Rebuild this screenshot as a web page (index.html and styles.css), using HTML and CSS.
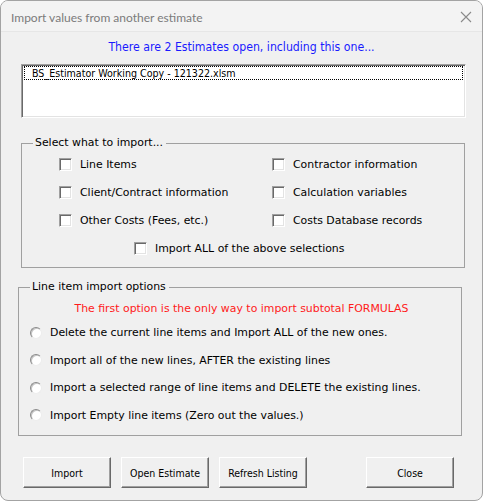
FILE: index.html
```html
<!DOCTYPE html>
<html lang="en">
<head>
    <meta charset="UTF-8">
    <title>Import values from another estimate</title>
    <link rel="stylesheet" href="styles.css">
</head>
<body>
<div class="window">
    <div class="titlebar">
        <span class="title">Import values from another estimate</span>
        <svg class="close-x" width="12" height="12" viewBox="0 0 12 12">
            <path d="M1 1 L11 11 M11 1 L1 11" stroke="#8a8a8a" stroke-width="1.1" fill="none"/>
        </svg>
    </div>
    <div class="form">
        <div class="caption">There are 2 Estimates open, including this one...</div>
        <div class="listbox">
            <div class="list-item selected">BS_Estimator Working Copy - 121322.xlsm</div>
        </div>

        <fieldset class="frame frame-select">
            <legend>Select what to import...</legend>
            <div class="check-grid">
                <label class="check"><span class="box"></span>Line Items</label>
                <label class="check"><span class="box"></span>Contractor information</label>
                <label class="check"><span class="box"></span>Client/Contract information</label>
                <label class="check"><span class="box"></span>Calculation variables</label>
                <label class="check"><span class="box"></span>Other Costs (Fees, etc.)</label>
                <label class="check"><span class="box"></span>Costs Database records</label>
                <label class="check check-all"><span class="box"></span>Import ALL of the above selections</label>
            </div>
        </fieldset>

        <fieldset class="frame frame-options">
            <legend>Line item import options</legend>
            <div class="warning">The first option is the only way to import subtotal FORMULAS</div>
            <div class="radio-list">
                <label class="radio"><span class="dot"></span>Delete the current line items and Import ALL of the new ones.</label>
                <label class="radio"><span class="dot"></span>Import all of the new lines, AFTER the existing lines</label>
                <label class="radio"><span class="dot"></span>Import a selected range of line items and DELETE the existing lines.</label>
                <label class="radio"><span class="dot"></span>Import Empty line items (Zero out the values.)</label>
            </div>
        </fieldset>

        <div class="buttons">
            <button>Import</button>
            <button>Open Estimate</button>
            <button>Refresh Listing</button>
            <button class="btn-close">Close</button>
        </div>
    </div>
</div>
</body>
</html>
```
FILE: styles.css
```css
* {
    box-sizing: border-box;
    margin: 0;
    padding: 0;
}

body {
    font-family: "DejaVu Sans", sans-serif;
    font-size: 10.9px;
    color: #000;
    background: #fff;
}

.window {
    width: 483px;
    height: 501px;
    border: 1px solid #a3a3a3;
    border-radius: 8px;
    background: #f0f0f0;
    overflow: hidden;
}

.titlebar {
    height: 31px;
    background: #f3f3f3;
    border-bottom: 1px solid #e6e6e6;
    display: flex;
    align-items: center;
    justify-content: space-between;
    padding: 0 10px 0 10px;
}

.title {
    font-family: Lato, sans-serif;
    font-size: 12px;
    color: #7b7b7b;
    margin-top: 2px;
}

.close-x {
    margin-top: 1px;
}

.caption {
    margin-top: 7px;
    height: 16px;
    line-height: 16px;
    text-align: center;
    color: #1a1aff;
    font-size: 12.2px;
    font-stretch: condensed;
}

.listbox {
    margin: 9px 0 0 20px;
    width: 445px;
    height: 54px;
    background: #fff;
    border: 1px solid;
    border-color: #a0a0a0 #fff #fff #a0a0a0;
    box-shadow: inset 1px 1px 0 #696969, inset -1px -1px 0 #e3e3e3;
    padding: 1px 2px 0 2px;
}

.list-item {
    height: 14px;
    line-height: 12px;
    padding-left: 7px;
    white-space: nowrap;
    font-size: 10.6px;
    font-stretch: condensed;
}

.list-item.selected {
    border: 1px dotted #000;
}

.frame {
    border: 1px solid #a0a0a0;
    width: 444px;
    padding: 0;
}

.frame legend {
    margin-left: 11px;
    padding: 0 3px 0 2px;
    line-height: 14px;
}

.frame-select {
    margin: 18px 0 0 20px;
    padding-bottom: 5px;
}

.check-grid {
    display: grid;
    grid-template-columns: 213px 1fr;
    grid-auto-rows: 28px;
    padding-left: 37px;
}

.check {
    display: flex;
    align-items: center;
    white-space: nowrap;
}

.check-all {
    grid-column: 1 / -1;
    padding-left: 75px;
}

.box {
    width: 13px;
    height: 13px;
    margin-right: 8px;
    background: #fff;
    border: 1px solid;
    border-color: #a0a0a0 #fff #fff #a0a0a0;
    box-shadow: inset 1px 1px 0 #696969, inset -1px -1px 0 #e3e3e3;
}

.frame-options {
    margin: 12px 0 0 17px;
    padding-bottom: 6px;
}

.warning {
    color: #ff1a1a;
    text-align: center;
    margin: 8px 0 3px 3px;
    line-height: 14px;
}

.radio-list {
    padding-left: 11px;
}

.radio {
    display: flex;
    align-items: center;
    height: 27.5px;
    white-space: nowrap;
}

.dot {
    width: 12px;
    height: 12px;
    margin-right: 8px;
    border-radius: 50%;
    background: #fff;
    border: 1px solid;
    border-color: #8a8a8a #ececec #ececec #8a8a8a;
    box-shadow: inset 1px 1px 0 #c4c4c4;
}

.buttons {
    display: flex;
    gap: 10px;
    margin: 21px 0 0 22px;
    padding-right: 28px;
}

button {
    width: 88px;
    height: 31px;
    font-family: inherit;
    font-stretch: condensed;
    font-size: 10.5px;
    color: #000;
    background: #f0f0f0;
    border: 1px solid;
    border-color: #fff #696969 #696969 #fff;
    box-shadow: inset -1px -1px 0 #a0a0a0;
}

.btn-close {
    margin-left: auto;
}
```
